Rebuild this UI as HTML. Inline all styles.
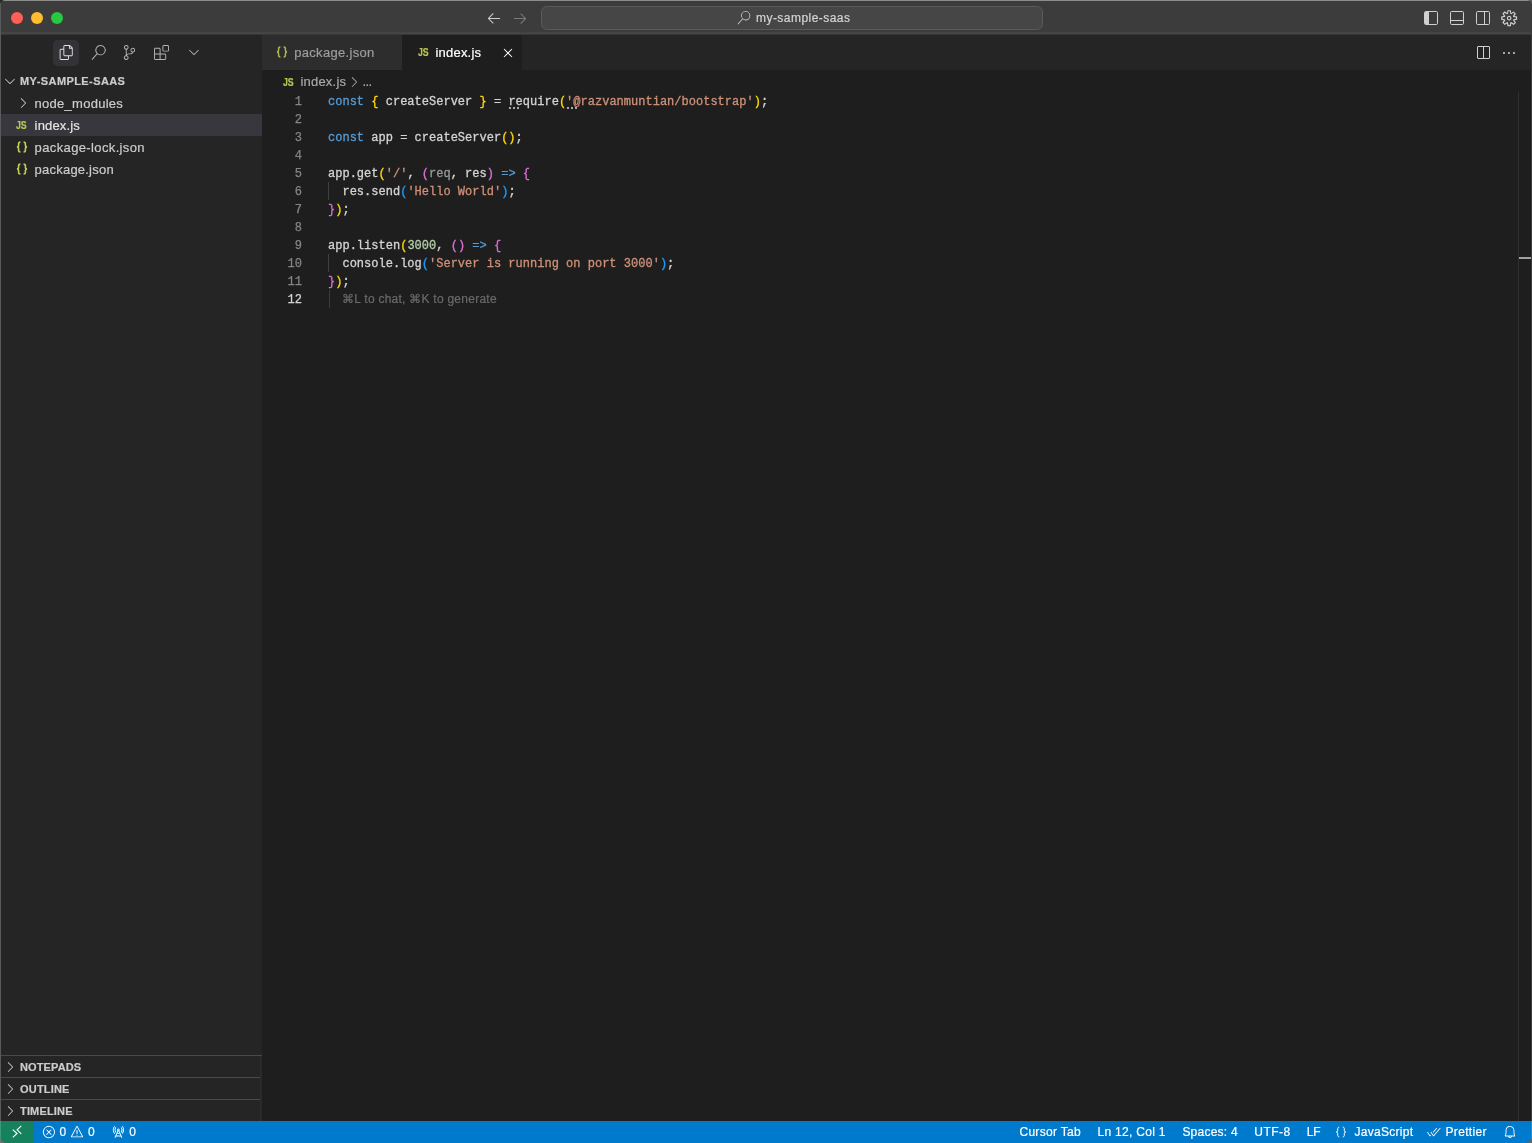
<!DOCTYPE html>
<html>
<head>
<meta charset="utf-8">
<title>index.js — my-sample-saas</title>
<style>
*{box-sizing:border-box;margin:0;padding:0}
html,body{width:1532px;height:1143px;overflow:hidden;background:#1e1e1e}
body{font-family:"Liberation Sans",sans-serif;color:#cccccc;position:relative;font-size:13px;-webkit-text-stroke:0.2px}
.abs{position:absolute}
#root{position:absolute;left:0;top:0;width:1532px;height:1143px;will-change:transform;overflow:hidden}
#titlebar{left:0;top:0;width:1532px;height:35px;background:#3c3c3c;border-top:1px solid #8c8c8c}
#titlebar .edge{left:0;top:31px;width:1532px;height:3px;background:linear-gradient(#424242 0,#464646 1.5px,#2e2e2e 3px)}
.tl{width:12px;height:12px;border-radius:50%;top:11px}
#cmd{left:541px;top:5px;width:502px;height:24px;border:1px solid #5a5a5a;border-radius:6px;background:#464646}
#cmd span{position:absolute;left:214px;top:4px;font-size:12px;color:#d4d4d4;letter-spacing:0.46px}
#sidebar{left:0;top:35px;width:262px;height:1086px;background:#252526}
#leftedge{left:0;top:0;width:1px;height:1143px;background:#5a5a5a}
.row{left:0;width:262px;height:22px;line-height:22px;font-size:13px;color:#cccccc;white-space:nowrap}
.row .lbl{position:absolute;left:34.6px;top:1px}
.row.sel{background:#37373d;color:#e4e4e4}
.hdr{left:0;width:262px;height:22px;line-height:22px;font-size:11px;font-weight:bold;color:#cccccc;white-space:nowrap}
.hdr .lbl{position:absolute;left:20px;top:0}
.jsi{font-size:10.3px;font-weight:bold;color:#bcc650;line-height:12px;height:12px;transform:scaleX(0.85);transform-origin:0 0}
.pane{border-top:1px solid #4a4a4a}
#tabbar{left:262px;top:35px;width:1270px;height:36px;background:#252526}
.tab{top:0;height:35px;line-height:35px;font-size:13px;white-space:nowrap}
#editor{left:262px;top:70px;width:1270px;height:1051px;background:#1e1e1e}
#crumbs{left:0;top:1px;height:22px;line-height:22px;font-size:13px;color:#a9a9a9;white-space:nowrap}
.ln{left:0;margin-top:1px;-webkit-text-stroke:0.25px;width:40px;text-align:right;font-family:"Liberation Mono",monospace;font-size:12px;height:18px;line-height:18px;color:#858585}
.ln.cur{color:#d4d4d4}
.code{left:66px;margin-top:1px;-webkit-text-stroke:0.3px;letter-spacing:0.013px;font-family:"Liberation Mono",monospace;font-size:12px;height:18px;line-height:18px;color:#d4d4d4;white-space:pre}
.k{color:#569cd6}.y{color:#ffd700}.p{color:#da70d6}.b{color:#179fff}.s{color:#ce9178}.n{color:#b5cea8}.f{color:#9a9a9a}
.dots{width:10.2px;height:2px;background:repeating-linear-gradient(90deg,#a8a8a8 0,#a8a8a8 2.4px,transparent 2.4px,transparent 3.9px)}
.guide{width:1px;background:#404040}
#status{left:0;top:1121px;width:1532px;height:22px;background:#007acc;color:#ffffff;font-size:12px;line-height:22px;white-space:nowrap}
#status .it{position:absolute;top:0}
#remote{left:0;top:0;width:34px;height:22px;background:#16825d}
svg{position:absolute;overflow:visible}
</style>
</head>
<body>
<div id="root">
<!-- TITLE BAR -->
<div id="titlebar" class="abs">
  <div class="abs edge"></div>
  <div class="abs tl" style="left:11px;background:#ff5f57"></div>
  <div class="abs tl" style="left:31px;background:#febc2e"></div>
  <div class="abs tl" style="left:51px;background:#28c840"></div>
  <div id="cmd" class="abs"><svg style="left:195px;top:4.3px" width="13.6" height="13.6" viewBox="0 0 24 24" fill="#cccccc"><path d="M15.25 0a8.25 8.25 0 0 0-6.18 13.72L1 22.88l1.12 1 8.05-9.12A8.251 8.251 0 1 0 15.25.01V0zm0 15a6.75 6.75 0 1 1 0-13.5 6.75 6.75 0 0 1 0 13.5z"/></svg><span>my-sample-saas</span></div>
  <svg style="left:486px;top:9px" width="16" height="16" viewBox="0 0 16 16" fill="#cccccc"><path d="M7 3.093l-5 5V8.8l5 5 .707-.707-4.146-4.147H14v-1H3.56L7.707 3.8 7 3.093z"/></svg>
  <svg style="left:512px;top:9px" width="16" height="16" viewBox="0 0 16 16" fill="#7a7a7a"><path d="M9 13.887l5-5V8.18l-5-5-.707.707 4.146 4.147H2v1h10.44L8.293 13.18l.707.707z"/></svg>
  <svg style="left:1423px;top:9px" width="16" height="16" viewBox="0 0 16 16" fill="none" stroke="#d0d0d0" stroke-width="1"><rect x="1.5" y="1.5" width="13" height="13" rx="1.2"/><path d="M2 2h4v12H2z" fill="#d0d0d0" stroke="none"/></svg>
  <svg style="left:1449px;top:9px" width="16" height="16" viewBox="0 0 16 16" fill="none" stroke="#d0d0d0" stroke-width="1"><rect x="1.5" y="1.5" width="13" height="13" rx="1.2"/><path d="M1.5 10.5h13"/></svg>
  <svg style="left:1475px;top:9px" width="16" height="16" viewBox="0 0 16 16" fill="none" stroke="#d0d0d0" stroke-width="1"><rect x="1.5" y="1.5" width="13" height="13" rx="1.2"/><path d="M9.5 1.5v13"/></svg>
  <svg style="left:1499.9px;top:7.7px" width="18.3" height="18.3" viewBox="0 0 16 16" fill="#d0d0d0"><path fill-rule="evenodd" d="M9.1 4.4L8.6 2H7.4l-.5 2.4-.7.3-2-1.3-.9.8 1.3 2-.2.7-2.4.5v1.2l2.4.5.3.8-1.3 2 .8.8 2-1.3.8.3.4 2.3h1.2l.5-2.4.8-.3 2 1.3.8-.8-1.3-2 .3-.8 2.3-.4V7.4l-2.4-.5-.3-.8 1.3-2-.8-.8-2 1.3-.7-.2zM9.4 1l.5 2.4L12 2.1l2 2-1.4 2.1 2.4.4v2.8l-2.4.5L14 12l-2 2-2.1-1.4-.5 2.4H6.6l-.5-2.4L4 13.9l-2-2 1.4-2.1L1 9.4V6.6l2.4-.5L2.1 4l2-2 2.1 1.4.4-2.4h2.8zm.6 7c0 1.1-.9 2-2 2s-2-.9-2-2 .9-2 2-2 2 .9 2 2zM8 9c.6 0 1-.4 1-1s-.4-1-1-1-1 .4-1 1 .4 1 1 1z"/></svg>

</div>

<!-- SIDEBAR -->
<div id="sidebar" class="abs">
  <div class="abs" style="left:53px;top:5px;width:26px;height:26px;border-radius:5px;background:#333337"></div>
  <svg style="left:58.5px;top:10.1px" width="15" height="15" viewBox="0 0 24 24" fill="#e0e0e0"><path d="M17.5 0h-9L7 1.5V6H2.5L1 7.5v15.07L2.5 24h12.07L16 22.57V18h4.7l1.3-1.43V4.5L17.5 0zm0 2.12l2.38 2.38H17.5V2.12zm-3 20.38h-12v-15H7v9.07L8.5 18h6v4.5zm6-6h-12v-15H16V6h4.5v10.5z"/></svg>
  <svg style="left:90.6px;top:10px" width="15" height="15" viewBox="0 0 24 24" fill="#b4b4b4"><path d="M15.25 0a8.25 8.25 0 0 0-6.18 13.72L1 22.88l1.12 1 8.05-9.12A8.251 8.251 0 1 0 15.25.01V0zm0 15a6.75 6.75 0 1 1 0-13.5 6.75 6.75 0 0 1 0 13.5z"/></svg>
  <svg style="left:122.2px;top:10.1px" width="15" height="15" viewBox="0 0 24 24" fill="#b4b4b4"><path d="M21.007 8.222A3.738 3.738 0 0 0 15.045 5.2a3.737 3.737 0 0 0 1.156 6.583 2.988 2.988 0 0 1-2.668 1.67h-2.99a4.456 4.456 0 0 0-2.989 1.165V7.4a3.737 3.737 0 1 0-1.494 0v9.117a3.776 3.776 0 1 0 1.816.099 2.99 2.99 0 0 1 2.668-1.667h2.99a4.484 4.484 0 0 0 4.223-3.039 3.736 3.736 0 0 0 3.25-3.687zM4.565 3.738a2.242 2.242 0 1 1 4.484 0 2.242 2.242 0 0 1-4.484 0zm4.484 16.441a2.242 2.242 0 1 1-4.484 0 2.242 2.242 0 0 1 4.484 0zm8.221-9.715a2.242 2.242 0 1 1 0-4.485 2.242 2.242 0 0 1 0 4.485z"/></svg>
  <svg style="left:154.3px;top:10.1px" width="15" height="15" viewBox="0 0 24 24" fill="#b4b4b4"><path fill-rule="evenodd" d="M13.5 1.5L15 0h7.5L24 1.5V9l-1.5 1.5H15L13.5 9V1.5zm1.5 0V9h7.5V1.5H15zM0 15V6l1.5-1.5H9L10.5 6v7.5H18l1.5 1.5v7.5L18 24H1.5L0 22.5V15zm9-1.5V6H1.5v7.5H9zM9 15H1.5v7.5H9V15zm1.5 7.5H18V15h-7.5v7.5z"/></svg>
  <svg style="left:186.2px;top:9.3px" width="16" height="16" viewBox="0 0 16 16" fill="#b4b4b4"><path d="M7.976 10.072l4.357-4.357.62.618L8.284 11h-.618L3 6.333l.619-.618 4.357 4.357z"/></svg>

  <div class="abs hdr" style="top:35px"><svg style="left:2px;top:3px" width="16" height="16" viewBox="0 0 16 16" fill="#c5c5c5"><path d="M7.976 10.072l4.357-4.357.62.618L8.284 11h-.618L3 6.333l.619-.618 4.357 4.357z"/></svg><span class="lbl" style="letter-spacing:0.41px">MY-SAMPLE-SAAS</span></div>
  <div class="abs row" style="top:57px"><svg style="left:15px;top:3px" width="16" height="16" viewBox="0 0 16 16" fill="#c5c5c5"><path d="M10.072 8.024L5.715 3.667l.618-.62L11 7.716v.618L6.333 13l-.618-.619 4.357-4.357z"/></svg><span class="lbl" style="letter-spacing:0.27px">node_modules</span></div>
  <div class="abs row sel" style="top:79px"><span class="abs jsi" style="left:16.4px;top:6px">JS</span><span class="lbl" style="letter-spacing:0.16px">index.js</span></div>
  <div class="abs row" style="top:101px"><svg style="left:15.5px;top:5.3px" width="12" height="12" viewBox="0 0 12 12" fill="none" stroke="#c3cd55" stroke-width="1.6"><path d="M4.4 1.1C3 1.1 2.6 1.6 2.6 2.8v1.5C2.6 5.4 2.1 6 .9 6c1.2 0 1.7.6 1.7 1.7v1.5c0 1.2.4 1.7 1.8 1.7"/><path d="M7.6 1.1c1.4 0 1.8.5 1.8 1.7v1.5c0 1.1.5 1.7 1.7 1.7-1.2 0-1.7.6-1.7 1.7v1.5c0 1.2-.4 1.7-1.8 1.7"/></svg><span class="lbl" style="letter-spacing:0.37px">package-lock.json</span></div>
  <div class="abs row" style="top:123px"><svg style="left:15.5px;top:5.3px" width="12" height="12" viewBox="0 0 12 12" fill="none" stroke="#c3cd55" stroke-width="1.6"><path d="M4.4 1.1C3 1.1 2.6 1.6 2.6 2.8v1.5C2.6 5.4 2.1 6 .9 6c1.2 0 1.7.6 1.7 1.7v1.5c0 1.2.4 1.7 1.8 1.7"/><path d="M7.6 1.1c1.4 0 1.8.5 1.8 1.7v1.5c0 1.1.5 1.7 1.7 1.7-1.2 0-1.7.6-1.7 1.7v1.5c0 1.2-.4 1.7-1.8 1.7"/></svg><span class="lbl" style="letter-spacing:0.22px">package.json</span></div>

  <div class="abs hdr pane" style="top:1020px"><svg style="left:2px;top:3px" width="16" height="16" viewBox="0 0 16 16" fill="#c5c5c5"><path d="M10.072 8.024L5.715 3.667l.618-.62L11 7.716v.618L6.333 13l-.618-.619 4.357-4.357z"/></svg><span class="lbl" style="letter-spacing:0.12px">NOTEPADS</span></div>
  <div class="abs hdr pane" style="top:1042px"><svg style="left:2px;top:3px" width="16" height="16" viewBox="0 0 16 16" fill="#c5c5c5"><path d="M10.072 8.024L5.715 3.667l.618-.62L11 7.716v.618L6.333 13l-.618-.619 4.357-4.357z"/></svg><span class="lbl" style="letter-spacing:0.19px">OUTLINE</span></div>
  <div class="abs hdr pane" style="top:1064px"><svg style="left:2px;top:3px" width="16" height="16" viewBox="0 0 16 16" fill="#c5c5c5"><path d="M10.072 8.024L5.715 3.667l.618-.62L11 7.716v.618L6.333 13l-.618-.619 4.357-4.357z"/></svg><span class="lbl" style="letter-spacing:0.17px">TIMELINE</span></div>
</div>

<div class="abs" style="left:260px;top:1056px;width:2px;height:65px;background:#2a2a2a"></div>
<!-- TAB BAR -->
<div id="tabbar" class="abs">
  <div class="abs tab" style="left:0;width:140px;background:#2d2d2d;color:#9d9d9d"><svg style="left:13.5px;top:11px" width="12" height="12" viewBox="0 0 12 12" fill="none" stroke="#aeb850" stroke-width="1.5"><path d="M4.4 1.1C3 1.1 2.6 1.6 2.6 2.8v1.5C2.6 5.4 2.1 6 .9 6c1.2 0 1.7.6 1.7 1.7v1.5c0 1.2.4 1.7 1.8 1.7"/><path d="M7.6 1.1c1.4 0 1.8.5 1.8 1.7v1.5c0 1.1.5 1.7 1.7 1.7-1.2 0-1.7.6-1.7 1.7v1.5c0 1.2-.4 1.7-1.8 1.7"/></svg><span class="abs" style="left:32.2px;letter-spacing:0.31px">package.json</span></div>
  <div class="abs tab" style="left:140px;width:120px;background:#1e1e1e;color:#ffffff"><span class="abs jsi" style="left:15.6px;top:11.5px">JS</span><span class="abs" style="left:33.5px;letter-spacing:0.2px">index.js</span><svg style="left:98px;top:10px" width="16" height="16" viewBox="0 0 16 16" fill="#ffffff"><path d="M8 8.707l3.646 3.647.708-.707L8.707 8l3.647-3.646-.707-.708L8 7.293 4.354 3.646l-.707.708L7.293 8l-3.646 3.646.707.708L8 8.707z"/></svg></div>
</div>

<svg style="left:1475px;top:45px" width="16" height="16" viewBox="0 0 16 16" fill="#d0d0d0"><path d="M14 1H3L2 2v11l1 1h11l1-1V2l-1-1zM8 13H3V2h5v11zm6 0H9V2h5v11z"/></svg>
<svg style="left:1501px;top:45px" width="16" height="16" viewBox="0 0 16 16" fill="#d0d0d0"><path d="M4 8a1 1 0 1 1-2 0 1 1 0 0 1 2 0zm5 0a1 1 0 1 1-2 0 1 1 0 0 1 2 0zm5 0a1 1 0 1 1-2 0 1 1 0 0 1 2 0z"/></svg>
<!-- EDITOR -->
<div id="editor" class="abs">
  <div id="crumbs" class="abs"><span class="abs jsi" style="left:20.6px;top:6px">JS</span><span class="abs" style="left:38.4px;letter-spacing:0.22px">index.js</span><svg style="left:83.5px;top:2.5px" width="16" height="16" viewBox="0 0 16 16" fill="#a9a9a9"><path d="M10.072 8.024L5.715 3.667l.618-.62L11 7.716v.618L6.333 13l-.618-.619 4.357-4.357z"/></svg><span class="abs" style="left:100.5px;letter-spacing:-0.6px">...</span></div>

  <div class="abs ln" style="top:22px">1</div>
  <div class="abs ln" style="top:40px">2</div>
  <div class="abs ln" style="top:58px">3</div>
  <div class="abs ln" style="top:76px">4</div>
  <div class="abs ln" style="top:94px">5</div>
  <div class="abs ln" style="top:112px">6</div>
  <div class="abs ln" style="top:130px">7</div>
  <div class="abs ln" style="top:148px">8</div>
  <div class="abs ln" style="top:166px">9</div>
  <div class="abs ln" style="top:184px">10</div>
  <div class="abs ln" style="top:202px">11</div>
  <div class="abs ln cur" style="top:220px">12</div>

  <div class="abs code" style="top:22px"><span class="k">const</span> <span class="y">{</span> createServer <span class="y">}</span> = require<span class="y">(</span><span class="s">'@razvanmuntian/bootstrap'</span><span class="y">)</span>;</div>
  <div class="abs code" style="top:58px"><span class="k">const</span> app = createServer<span class="y">()</span>;</div>
  <div class="abs code" style="top:94px">app.get<span class="y">(</span><span class="s">'/'</span>, <span class="p">(</span><span class="f">req</span>, res<span class="p">)</span> <span class="k">=&gt;</span> <span class="p">{</span></div>
  <div class="abs code" style="top:112px">  res.send<span class="b">(</span><span class="s">'Hello World'</span><span class="b">)</span>;</div>
  <div class="abs code" style="top:130px"><span class="p">}</span><span class="y">)</span>;</div>
  <div class="abs code" style="top:166px">app.listen<span class="y">(</span><span class="n">3000</span>, <span class="p">()</span> <span class="k">=&gt;</span> <span class="p">{</span></div>
  <div class="abs code" style="top:184px">  console.log<span class="b">(</span><span class="s">'Server is running on port 3000'</span><span class="b">)</span>;</div>
  <div class="abs code" style="top:202px"><span class="p">}</span><span class="y">)</span>;</div>
  <div class="abs hint" style="left:80px;top:220px;height:18px;line-height:18px;font-size:12px;color:#6a6a6a;white-space:nowrap;letter-spacing:0.25px">⌘L to chat, ⌘K to generate</div>

  <div class="abs dots" style="left:247px;top:37px"></div><div class="abs dots" style="left:304.5px;top:37px"></div>
  <div class="abs guide" style="left:66px;top:112px;height:18px"></div>
  <div class="abs guide" style="left:66px;top:184px;height:18px"></div>
  <div class="abs guide" style="left:66.5px;top:220px;height:18px;width:1.5px;background:#3c3c3c"></div>

  <div class="abs" style="left:1256px;top:22px;width:1px;height:1029px;background:#303030"></div>
  <div class="abs" style="left:1257px;top:187px;width:13px;height:2px;background:#a0a0a0"></div>
</div>

<!-- STATUS BAR -->
<div id="status" class="abs">
  <div id="remote" class="abs"></div>
  <svg style="left:9px;top:3px" width="16" height="16" viewBox="0 0 16 16" fill="none" stroke="#ffffff" stroke-width="1.1"><path d="M3.8 5.7l4.2 3.8-4.2 3.8M12.3 1.8L8.1 5.8l4.2 4"/></svg>
  <svg style="left:41.9px;top:4px" width="14" height="14" viewBox="0 0 16 16" fill="#ffffff"><path d="M8.6 1c1.6.1 3.1.9 4.2 2 1.3 1.4 2 3.1 2 5.1 0 1.6-.6 3.1-1.6 4.4-1 1.2-2.4 2.1-4 2.4-1.6.3-3.2.1-4.6-.7-1.4-.8-2.5-2-3.1-3.5C.9 9.2.8 7.5 1.3 6c.5-1.6 1.4-2.9 2.8-3.8C5.4 1.3 7 .9 8.6 1zm.5 12.9c1.3-.3 2.5-1 3.4-2.1.8-1.1 1.3-2.4 1.2-3.8 0-1.6-.6-3.2-1.7-4.3-1-1-2.2-1.6-3.6-1.7-1.3-.1-2.7.2-3.8 1-1.1.8-1.9 1.9-2.3 3.3-.4 1.3-.4 2.7.2 4 .6 1.3 1.5 2.3 2.7 3 1.2.7 2.6.9 3.9.6zM7.9 7.5L10.3 5l.7.7-2.4 2.5 2.4 2.5-.7.7-2.4-2.5-2.4 2.5-.7-.7 2.4-2.5-2.4-2.5.7-.7 2.4 2.5z"/></svg>
  <svg style="left:70.2px;top:4px" width="14" height="14" viewBox="0 0 16 16" fill="#ffffff"><path d="M7.56 1h.88l6.54 12.26-.44.74H1.44L1 13.26 7.56 1zM8 2.28L2.28 13H13.7L8 2.28zM8.625 12v-1h-1.25v1h1.25zm-1.25-2V6h1.25v4h-1.25z"/></svg>
  <svg style="left:111.4px;top:4px" width="14" height="14" viewBox="0 0 16 16" fill="#ffffff"><path d="M2.998 5.58a5.55 5.55 0 0 1 1.62-3.88l-.71-.7a6.45 6.45 0 0 0 0 9.16l.71-.7a5.55 5.55 0 0 1-1.62-3.88zm1.06 0a4.42 4.42 0 0 0 1.32 3.17l.71-.71a3.27 3.27 0 0 1-.76-1.12 3.45 3.45 0 0 1 0-2.67 3.22 3.22 0 0 1 .76-1.13l-.71-.71a4.46 4.46 0 0 0-1.32 3.17zm7.65 3.21l-.71-.71c.33-.32.59-.704.76-1.13a3.449 3.449 0 0 0 0-2.67 3.22 3.22 0 0 0-.76-1.13l.71-.7a4.468 4.468 0 0 1 0 6.34zM13.068 1l-.71.71a5.43 5.43 0 0 1 0 7.74l.71.71a6.45 6.45 0 0 0 0-9.16zM9.993 5.43a1.5 1.5 0 0 1-.245.98 2 2 0 0 1-.27.23l3.44 7.73-.92.4-.77-1.73h-5.54l-.77 1.73-.92-.4 3.44-7.73a1.52 1.52 0 0 1-.33-1.63 1.55 1.55 0 0 1 .56-.68 1.5 1.5 0 0 1 2.325 1.1zm-1.595-.34a.52.52 0 0 0-.25.14.52.52 0 0 0-.11.22.48.48 0 0 0 0 .29c.04.09.102.17.18.23a.54.54 0 0 0 .28.08.51.51 0 0 0 .5-.5.54.54 0 0 0-.08-.28.58.58 0 0 0-.23-.18.48.48 0 0 0-.29 0zm.23 2.05h-.27l-.87 1.94h2l-.86-1.94zm2.2 4.94l-.89-2h-2.88l-.89 2h4.66z"/></svg>
  <svg style="left:1335px;top:5px" width="12" height="12" viewBox="0 0 12 12" fill="none" stroke="#ffffff" stroke-width="1"><path d="M4.2 1.2C3 1.2 2.7 1.7 2.7 2.8v1.5C2.7 5.4 2.3 6 1.2 6c1.1 0 1.5.6 1.5 1.7v1.5c0 1.1.3 1.6 1.5 1.6"/><path d="M7.8 1.2c1.2 0 1.5.5 1.5 1.6v1.5c0 1.1.4 1.7 1.5 1.7-1.1 0-1.5.6-1.5 1.7v1.5c0 1.1-.3 1.6-1.5 1.6"/></svg>
  <svg style="left:1427px;top:4px" width="14" height="14" viewBox="0 0 16 16" fill="#ffffff"><path d="M15.62 3.596L7.815 12.81l-.728-.033L4 8.382l.754-.53 2.744 3.907L14.917 3l.703.596z"/><path d="M7.234 8.774l4.386-5.178L10.917 3l-4.23 4.994.547.78zm-1.55.403l.548.78-.547-.78zm-1.617 1.91l.547.78-.799.943-.728-.033L0 8.382l.754-.53 2.744 3.907.57-.672z"/></svg>
  <svg style="left:1503.4px;top:4px" width="14" height="14" viewBox="0 0 16 16" fill="#ffffff"><path d="M13.377 10.573a7.63 7.63 0 0 1-.383-2.38V6.195a5.115 5.115 0 0 0-1.268-3.446 5.138 5.138 0 0 0-3.242-1.722c-.694-.072-1.4 0-2.07.227-.67.215-1.28.574-1.794 1.053a4.923 4.923 0 0 0-1.208 1.675 5.067 5.067 0 0 0-.431 2.022v2.2a7.61 7.61 0 0 1-.383 2.37L2 12.343l.479.658h3.505c0 .526.215 1.04.586 1.412.37.37.885.586 1.412.586.526 0 1.04-.215 1.411-.586s.587-.886.587-1.412h3.505l.478-.658-.586-1.77zm-4.69 3.147a.997.997 0 0 1-.705.299.997.997 0 0 1-.706-.3.997.997 0 0 1-.3-.705h1.999a.939.939 0 0 1-.287.706zm-5.515-1.71l.371-1.114a8.633 8.633 0 0 0 .443-2.691V6.004c0-.563.12-1.113.347-1.616.227-.514.55-.969.969-1.34.419-.382.91-.67 1.436-.837.538-.18 1.1-.24 1.65-.18a4.147 4.147 0 0 1 2.597 1.4 4.133 4.133 0 0 1 1.004 2.776v2.01c0 .909.144 1.818.443 2.691l.371 1.113h-9.63v-.012z"/></svg>

  <span class="it" style="left:59.6px">0</span>
  <span class="it" style="left:88px">0</span>
  <span class="it" style="left:129.2px">0</span>
  <span class="it" style="left:1019.4px;letter-spacing:0.32px">Cursor Tab</span>
  <span class="it" style="left:1097.5px;letter-spacing:0.29px">Ln 12, Col 1</span>
  <span class="it" style="left:1182.4px;letter-spacing:0.23px">Spaces: 4</span>
  <span class="it" style="left:1254.3px;letter-spacing:0.44px">UTF-8</span>
  <span class="it" style="left:1306.7px;letter-spacing:-0.1px">LF</span>
  <span class="it" style="left:1354.4px;letter-spacing:0.3px">JavaScript</span>
  <span class="it" style="left:1445.5px;letter-spacing:0.32px">Prettier</span>
</div>
<div id="leftedge" class="abs"></div>
<div class="abs" style="left:1531px;top:1px;width:1px;height:1120px;background:#3a3a3a"></div>
<div class="abs" style="left:1531px;top:1121px;width:1px;height:22px;background:#2a8ad4"></div>
<div class="abs" style="left:0;top:1121px;width:1px;height:22px;background:#3a9a7a"></div>
<div class="abs" style="left:0;top:1137px;width:6px;height:6px;background:radial-gradient(circle at 100% 0,rgba(0,0,0,0) 5.5px,#7a7073 6.3px)"></div>
<div class="abs" style="left:1526px;top:1137px;width:6px;height:6px;background:radial-gradient(circle at 0 0,rgba(0,0,0,0) 5.5px,#6e6052 6.3px)"></div>
<div class="abs" style="left:0;top:0;width:5px;height:5px;background:radial-gradient(circle at 100% 100%,rgba(0,0,0,0) 4.5px,#2a2a2a 5.3px)"></div>
<div class="abs" style="left:1527px;top:0;width:5px;height:5px;background:radial-gradient(circle at 0 100%,rgba(0,0,0,0) 4.5px,#5a5a5a 5.3px)"></div>
</div>
</body>
</html>
